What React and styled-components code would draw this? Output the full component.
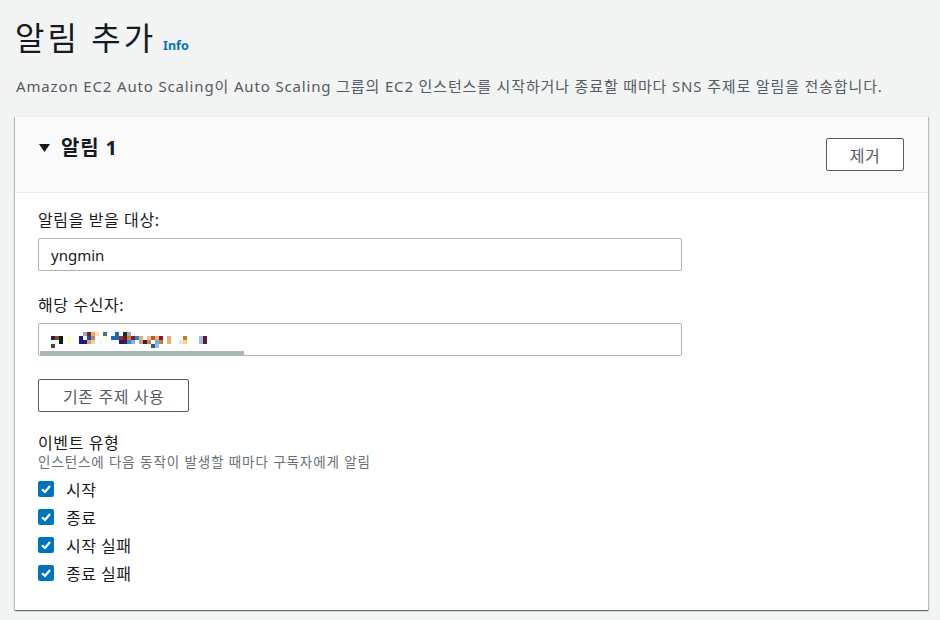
import React from 'react';
import styled, { createGlobalStyle } from 'styled-components';

const GlobalStyle = createGlobalStyle`
  body {
    margin: 0;
    background: #f2f3f3;
    font-family: "Noto Sans", "Noto Sans CJK KR", sans-serif;
    color: #16191f;
  }
`;

// mosaic blocks over the redacted email: [x, row, colour]
const mosaic = [
  [32, 0, '#9aa7c8'], [36, 0, '#6b2a2a'], [40, 0, '#e8b070'], [44, 0, '#f8e0c0'], [52, 0, '#5a7070'],
  [64, 0, '#1a6ab8'], [72, 0, '#1a2a40'], [76, 0, '#b0a8a0'],
  [0, 1, '#2a1a50'], [4, 1, '#8a4a2a'], [8, 1, '#101820'], [16, 1, '#ffffc8'], [28, 1, '#1a1a80'],
  [32, 1, '#ffffff'], [36, 1, '#1a4ab0'], [40, 1, '#c08050'], [52, 1, '#ffffc8'], [60, 1, '#1a6ab8'],
  [64, 1, '#1a6ab8'], [68, 1, '#8a3a2a'], [72, 1, '#6a1a2a'], [76, 1, '#c08040'], [80, 1, '#8a1a2a'],
  [84, 1, '#1a8ad0'], [88, 1, '#e8b070'], [96, 1, '#e8c090'], [100, 1, '#b06020'], [104, 1, '#e8b070'],
  [108, 1, '#8a1a2a'], [116, 1, '#e8b070'], [132, 1, '#c08020'], [148, 1, '#90c0f0'], [152, 1, '#6a1a2a'],
  [4, 2, '#e0fff0'], [8, 2, '#101820'], [16, 2, '#ffffc8'], [28, 2, '#1a1a80'], [32, 2, '#1a1a80'],
  [36, 2, '#d0a080'], [40, 2, '#f0d0a0'], [48, 2, '#e0fff8'], [68, 2, '#1a1a80'], [72, 2, '#4a1a50'],
  [76, 2, '#3a8ad0'], [80, 2, '#70b8f0'], [88, 2, '#c0a080'], [92, 2, '#4a1a20'], [96, 2, '#b08060'],
  [104, 2, '#70b0f0'], [108, 2, '#c08040'], [116, 2, '#e8b070'], [128, 2, '#e0e8f0'], [132, 2, '#f8d090'],
  [148, 2, '#90c0f0'], [152, 2, '#6a1a2a'],
  [0, 3, '#4a4a3a'], [100, 3, '#3a5a6a'], [104, 3, '#90c0f0'],
];

const events = ['시작', '종료', '시작 실패', '종료 실패'];

const App = () => {
  return (
    <Page>
      <GlobalStyle />
      <TitleRow>
        <Title>알림 추가</Title>
        <InfoLink>Info</InfoLink>
      </TitleRow>
      <Description>
        Amazon EC2 Auto Scaling이 Auto Scaling 그룹의 EC2 인스턴스를 시작하거나 종료할 때마다 SNS 주제로 알림을 전송합니다.
      </Description>

      <Card>
        <CardHeader>
          <CardTitle>
            <svg width="11" height="8" viewBox="0 0 11 8">
              <polygon points="0,0 11,0 5.5,8" fill="#16191f" />
            </svg>
            알림 1
          </CardTitle>
          <HeaderButton>제거</HeaderButton>
        </CardHeader>

        <CardBody>
          <Field>
            <Label>알림을 받을 대상:</Label>
            <TextBox>yngmin</TextBox>
          </Field>

          <Field>
            <Label>해당 수신자:</Label>
            <TextBox>
              <svg width="160" height="16" viewBox="0 0 160 16">
                {mosaic.map(([x, row, c], i) => (
                  <rect key={i} x={x} y={row * 4} width="4" height="4" fill={c} />
                ))}
              </svg>
              <ScrollBar />
            </TextBox>
          </Field>

          <Button>기존 주제 사용</Button>

          <EventGroup>
            <Label>이벤트 유형</Label>
            <Hint>인스턴스에 다음 동작이 발생할 때마다 구독자에게 알림</Hint>
            <CheckList>
              {events.map((e) => (
                <CheckRow key={e}>
                  <CheckBox>
                    <svg width="12" height="12" viewBox="0 0 12 12">
                      <polyline points="2,6.2 5,9 10,3" fill="none" stroke="#fff" strokeWidth="2.2" />
                    </svg>
                  </CheckBox>
                  <CheckLabel>{e}</CheckLabel>
                </CheckRow>
              ))}
            </CheckList>
          </EventGroup>
        </CardBody>
      </Card>
    </Page>
  );
};

const Page = styled.div`
  padding: 20px 12px 20px 15px;
`;

const TitleRow = styled.div`
  display: flex;
  align-items: baseline;
  gap: 7px;
`;

const Title = styled.h1`
  margin: 0;
  font-size: 32px;
  line-height: 36px;
  font-weight: 400;
  letter-spacing: 3px;
  color: #16191f;
`;

const InfoLink = styled.a`
  font-size: 12.5px;
  font-weight: 700;
  color: #0073bb;
  cursor: pointer;
`;

const Description = styled.p`
  margin: 20px 0 20px 1px;
  font-size: 15px;
  line-height: 20px;
  letter-spacing: 0.85px;
  color: #545b64;
`;

const Card = styled.div`
  width: 913px;
  box-sizing: border-box;
  background: #ffffff;
  border-top: 1px solid #eaeded;
  box-shadow: 0 1px 1px 0 rgba(0, 28, 36, 0.4), 1px 1px 1px 0 rgba(0, 28, 36, 0.2),
    -1px 1px 1px 0 rgba(0, 28, 36, 0.2);
`;

const CardHeader = styled.div`
  height: 75px;
  display: flex;
  justify-content: space-between;
  align-items: flex-start;
  padding: 0 24px 0 24px;
  background: #fafafa;
  border-bottom: 1px solid #eaeded;
`;

const CardTitle = styled.h2`
  margin: 19px 0 0 0;
  display: flex;
  align-items: center;
  gap: 11px;
  font-size: 20px;
  line-height: 24px;
  font-weight: 700;
  letter-spacing: 0.8px;
  color: #16191f;
`;

const Button = styled.button`
  height: 33px;
  padding: 0 24px;
  background: #ffffff;
  border: 1px solid #545b64;
  border-radius: 2px;
  font-family: inherit;
  font-size: 16px;
  letter-spacing: 0.6px;
  color: #545b64;
  cursor: pointer;
  align-self: flex-start;
`;

const HeaderButton = styled(Button)`
  width: 78px;
  margin-top: 21px;
  padding: 0;
`;

const CardBody = styled.div`
  display: flex;
  flex-direction: column;
  padding: 16px 22px 23px 23px;
`;

const Field = styled.div`
  display: flex;
  flex-direction: column;
  gap: 7px;
  margin-bottom: 23px;
`;

const Label = styled.div`
  font-size: 16px;
  line-height: 22px;
  letter-spacing: 0.6px;
  color: #16191f;
`;

const TextBox = styled.div`
  position: relative;
  width: 644px;
  height: 33px;
  box-sizing: border-box;
  display: flex;
  align-items: center;
  padding: 0 12px;
  border: 1px solid #aab7b8;
  border-radius: 2px;
  font-size: 15px;
  color: #16191f;
  overflow: hidden;
`;

const ScrollBar = styled.span`
  position: absolute;
  left: 1px;
  bottom: 0;
  width: 204px;
  height: 4px;
  background: #aab7b8;
`;

const EventGroup = styled.div`
  display: flex;
  flex-direction: column;
  margin-top: 20px;
`;

const Hint = styled.div`
  font-size: 13.5px;
  line-height: 17px;
  letter-spacing: 0.9px;
  color: #687078;
`;

const CheckList = styled.div`
  display: flex;
  flex-direction: column;
  margin-top: 4px;
`;

const CheckRow = styled.label`
  display: flex;
  align-items: center;
  gap: 12px;
  height: 28px;
`;

const CheckBox = styled.span`
  width: 16px;
  height: 16px;
  border-radius: 2px;
  background: #0073bb;
  display: flex;
  align-items: center;
  justify-content: center;
`;

const CheckLabel = styled.span`
  font-size: 16px;
  letter-spacing: 0.5px;
  color: #16191f;
`;

export default App;
